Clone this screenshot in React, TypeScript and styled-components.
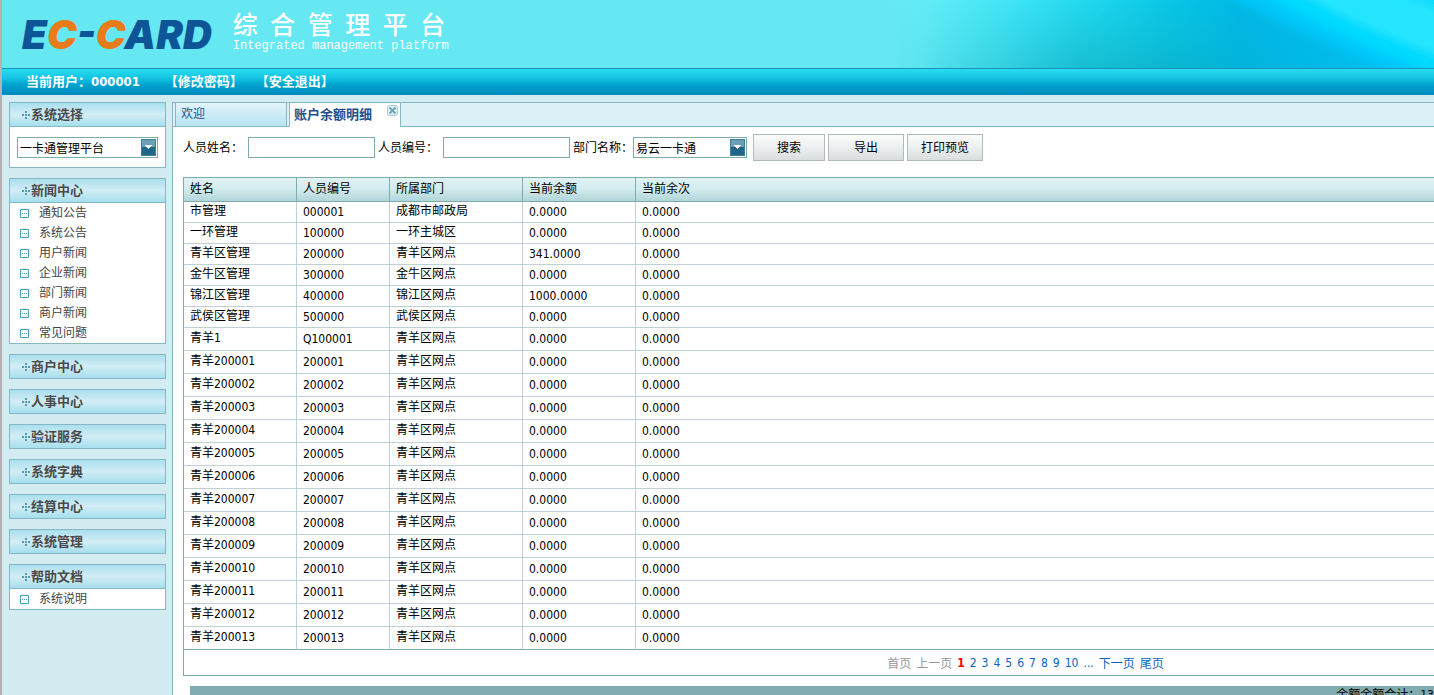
import React from "react";
import styled, { createGlobalStyle, css } from "styled-components";

const sans = `"DejaVu Sans Condensed", "Noto Sans", "Noto Sans CJK SC", sans-serif`;

const Global = createGlobalStyle`
  *, *::before, *::after { box-sizing: border-box; }
  html, body { margin: 0; padding: 0; overflow: hidden; }
  body { font-family: ${sans}; font-size: 12px; color: #000; background: #d3ecf1; }
  button, input, select { font-family: inherit; font-size: inherit; color: inherit; margin: 0; }
  a { text-decoration: none; color: inherit; }
  ul { list-style: none; margin: 0; padding: 0; }
`;

const Page = styled.div`
  display: flex;
  flex-direction: column;
  height: 100vh;
  overflow: hidden;
  border-left: 2px solid #b5b2b4;
`;

const Banner = styled.header`
  display: flex;
  justify-content: space-between;
  flex: none;
  height: 68px;
  background: #65e8f1;
  overflow: hidden;
`;

const Brand = styled.div`
  display: flex;
  gap: 21px;
  padding: 11px 0 0 20px;
`;

const Logo = styled.div`
  font-family: Inter, sans-serif;
  font-size: 40px;
  line-height: 48px;
  font-weight: 900;
  font-style: italic;
  color: #0e5597;
  white-space: nowrap;
`;

const Orange = styled.span`
  color: #e87b1a;
`;

const Slogan = styled.div`
  color: #fff;
  white-space: pre;
`;

const SloganTitle = styled.h1`
  margin: 0;
  padding-top: 2px;
  font-family: "Liberation Serif", "Noto Sans CJK SC", serif;
  font-size: 25px;
  line-height: 26px;
  font-weight: 500;
`;

const SloganText = styled.p`
  margin: 0;
  font-family: "Liberation Mono", monospace;
  font-size: 12px;
  line-height: 14px;
`;

const UserBar = styled.nav`
  display: flex;
  align-items: center;
  flex: none;
  height: 27px;
  padding: 0 0 4px 24px;
  gap: 13px;
  border-top: 1px solid #1c93bd;
  background: linear-gradient(#28dcf0, #14c4e2 35%, #00a4ce 60%, #0088bd);
  color: #fff;
  font-size: 13px;
  font-weight: bold;
`;

const CurrentUser = styled.span`
  margin-right: 12px;
`;

const Columns = styled.div`
  display: flex;
  flex: 1;
  min-height: 0;
  padding-top: 7px;
`;

const Sidebar = styled.aside`
  display: flex;
  flex-direction: column;
  gap: 10px;
  flex: none;
  width: 170px;
  padding: 0 6px 0 7px;
`;

const Panel = styled.section`
  border: 1px solid #86b7c3;
  background: #fff;
`;

const PanelTitle = styled.h2<{ $open: boolean }>`
  display: flex;
  align-items: center;
  gap: 1px;
  height: ${(p) => (p.$open ? 24 : 23)}px;
  margin: 0;
  padding-left: 12px;
  border-bottom: ${(p) => (p.$open ? "1px solid #86b7c3" : "0")};
  background: linear-gradient(#a9dfee, #d3edf4 50%, #a5dfee);
  color: #4a4a4a;
  font-size: 13px;
  line-height: 20px;
  font-weight: bold;
`;

const PanelBody = styled.div`
  padding: 10px 7px 9px;
`;

const MenuItem = styled.li`
  height: 20px;
`;

const MenuLink = styled.a`
  display: flex;
  align-items: center;
  gap: 10px;
  height: 20px;
  padding-left: 10px;
  color: #444;
`;

const MenuText = styled.span`
  padding-bottom: 3px;
`;

const SelectBox = styled.span<{ $width: number }>`
  position: relative;
  display: block;
  width: ${(p) => p.$width}px;
  height: 21px;
`;

const Select = styled.select`
  appearance: none;
  display: block;
  width: 100%;
  height: 21px;
  padding: 2px 18px 0 2px;
  border: 1px solid #7fabaf;
  border-radius: 0;
  background: #fff;
`;

const SelectArrow = styled.svg`
  position: absolute;
  top: 2px;
  right: 2px;
  pointer-events: none;
`;

const Main = styled.main`
  flex: 1;
  min-width: 0;
  overflow: hidden;
  border-left: 1px solid #86b7c3;
  background: #fff;
`;

const Tabs = styled.div`
  display: flex;
  gap: 2px;
  height: 25px;
  padding-left: 2px;
  border-top: 1px solid #86b7c3;
  border-bottom: 1px solid #86b7c3;
  background: #dcf0f7;
`;

const TabItem = styled.div<{ $active?: boolean }>`
  display: flex;
  justify-content: space-between;
  width: 112px;
  height: 23px;
  padding: 0 2px 0 5px;
  border: 0 solid #86b7c3;
  border-width: 0 1px;
  background: linear-gradient(#e2f4fa, #b8e4f0);
  color: #23508e;
  ${(p) =>
    p.$active &&
    css`
      height: 24px;
      padding-left: 4px;
      background: #fff;
      font-size: 13px;
      font-weight: bold;
    `}
`;

const TabLink = styled.a`
  line-height: 23px;
`;

const CloseButton = styled.button`
  align-self: flex-start;
  display: flex;
  padding: 2px 0 0;
  border: 0;
  background: none;
`;

const Content = styled.div`
  padding: 7px 0 0 10px;
`;

const SearchForm = styled.form`
  display: flex;
  align-items: center;
  gap: 3px;
  height: 27px;
  margin-bottom: 16px;
  white-space: nowrap;
`;

const Field = styled.div<{ $gap?: number }>`
  display: flex;
  align-items: center;
  gap: ${(p) => p.$gap ?? 0}px;
`;

const FieldLabel = styled.label`
  padding-bottom: 3px;
`;

const TextBox = styled.input`
  width: 127px;
  height: 21px;
  padding: 0 3px;
  border: 1px solid #7fabaf;
  border-radius: 0;
  background: #fff;
`;

const Buttons = styled.div`
  display: flex;
  gap: 3px;
  margin-left: 3px;
`;

const Button = styled.button<{ $width: number }>`
  width: ${(p) => p.$width}px;
  height: 27px;
  padding: 0 0 2px;
  border: 1px solid #b1b9ba;
  border-radius: 0;
  background: linear-gradient(#fafbfb, #eef1f1 45%, #d9dddd);
`;

const Sheet = styled.div`
  min-width: 1685px;
  border: 1px solid #7fabaf;
`;

const Table = styled.table`
  width: 100%;
  table-layout: fixed;
  border-collapse: separate;
  border-spacing: 0;
`;

const Col = styled.col<{ $width?: number }>`
  width: ${(p) => (p.$width ? `${p.$width}px` : "auto")};
`;

const HeadCell = styled.th`
  height: 24px;
  padding: 0 0 2px 6px;
  border-right: 1px solid #7fabaf;
  border-bottom: 1px solid #7fabaf;
  text-align: left;
  font-weight: normal;
  line-height: 20px;
`;

const HeadRow = styled.tr`
  background: linear-gradient(#e0f2f4, #d3ecee 45%, #aed3d7);
`;

const Cell = styled.td`
  padding: 0 0 0 6px;
  border-right: 1px solid #bfd1d8;
  border-bottom: 1px solid #bfd1d8;
  line-height: 18px;
  white-space: nowrap;
`;

const NameCell = styled(Cell)`
  padding-bottom: 2px;
`;

const Row = styled.tr<{ $tall: boolean }>`
  height: ${(p) => (p.$tall ? 23 : 21)}px;
  &:last-child > td {
    border-bottom-color: #7fabaf;
  }
`;

const Pager = styled.nav`
  display: flex;
  align-items: center;
  justify-content: center;
  gap: 5px;
  height: 25px;
  color: #0a62c4;
`;

const Muted = styled.span`
  color: #999;
`;

const Current = styled.b`
  color: #f00;
`;

const Summary = styled.footer`
  margin: 10px 0 0 7px;
  background: #80abb0;
  line-height: 18px;
  text-align: right;
  white-space: nowrap;
`;

const BannerArt = () => (
  <svg width="541" height="68" viewBox="0 0 541 68" aria-hidden="true">
    <defs>
      <linearGradient id="sea" x1="0" x2="1" y1="0" y2="0">
        <stop offset="0" stopColor="#65e8f1" />
        <stop offset="0.06" stopColor="#64ecf7" />
        <stop offset="0.2" stopColor="#44e6f7" />
        <stop offset="0.38" stopColor="#1cd6ee" />
        <stop offset="0.52" stopColor="#08c6e6" />
        <stop offset="0.64" stopColor="#00b9e6" />
        <stop offset="0.8" stopColor="#00bcec" />
        <stop offset="1" stopColor="#00c4f4" />
      </linearGradient>
      <linearGradient id="depth" x1="0" x2="0" y1="0" y2="1">
        <stop offset="0" stopColor="#0ba8b4" stopOpacity="0" />
        <stop offset="1" stopColor="#109fb0" stopOpacity="0.48" />
      </linearGradient>
      <linearGradient id="spread" x1="0" x2="1" y1="0" y2="0">
        <stop offset="0" stopColor="#000" />
        <stop offset="0.08" stopColor="#555" />
        <stop offset="0.35" stopColor="#fff" />
        <stop offset="0.5" stopColor="#ddd" />
        <stop offset="0.75" stopColor="#222" />
        <stop offset="1" stopColor="#000" />
      </linearGradient>
      <mask id="fade">
        <rect width="541" height="68" fill="url(#spread)" />
      </mask>
      <filter id="soft" x="-20%" y="-20%" width="140%" height="140%">
        <feGaussianBlur stdDeviation="4" />
      </filter>
    </defs>
    <rect width="541" height="68" fill="url(#sea)" />
    <rect width="541" height="68" fill="url(#depth)" mask="url(#fade)" />
    <g filter="url(#soft)">
      <path d="M310-20 L340-2 Q420 40 530 84 L570 84 L570-20Z" fill="#00c8fa" />
      <path d="M350-20 Q430 34 550 76 L570-20Z" fill="#00daff" />
      <path d="M390-20 Q450 22 570 64 L570 20 L470-20Z" fill="#28e6ff" />
      <path d="M490-20 L570 24 L570-20Z" fill="#0cdcfa" />
    </g>
  </svg>
);

const PlusDots = () => (
  <svg width="8" height="8" viewBox="0 0 8 8" fill="#4e9db8" aria-hidden="true">
    <path d="M3 0h2v2H3zM0 3h2v2H0zM3 3h2v2H3zM6 3h2v2H6zM3 6h2v2H3z" />
  </svg>
);

const NoteIcon = () => (
  <svg width="9" height="9" viewBox="0 0 9 9" aria-hidden="true">
    <path d="M.5.5h8v8h-8z" fill="#fff" stroke="#4a9fb8" />
    <path d="M2 4h1v1H2zM4 4h1v1H4zM6 4h1v1H6z" fill="#4a9fb8" />
  </svg>
);

const CloseIcon = () => (
  <svg width="11" height="11" viewBox="0 0 11 11" aria-hidden="true">
    <rect x=".5" y=".5" width="10" height="10" rx="2" fill="#e3f1f4" stroke="#a4cdd6" />
    <path d="M2.5 2.5l6 6M8.500 2.500l-6 6" stroke="#6fa6b4" strokeWidth="2" />
  </svg>
);

function Dropdown({ id, label, width, value }: { id: string; label?: string; width: number; value: string }) {
  return (
    <SelectBox $width={width}>
      <Select id={id} aria-label={label} defaultValue={value}>
        <option>{value}</option>
      </Select>
      <SelectArrow width="15" height="17" viewBox="0 0 15 17" aria-hidden="true">
        <rect width="15" height="17" fill="#3d7f9d" />
        <rect x="1" y="1" width="13" height="7" fill="#6d9fb9" />
        <rect x="1" y="8" width="13" height="8" fill="#1f6688" />
        <path d="M4 6h7v1h-1v1H9v1H8v1H7V9H6V8H5V7H4z" fill="#fff" />
      </SelectArrow>
    </SelectBox>
  );
}

const menus: { title: string; items?: string[] }[] = [
  { title: "新闻中心", items: ["通知公告", "系统公告", "用户新闻", "企业新闻", "部门新闻", "商户新闻", "常见问题"] },
  { title: "商户中心" },
  { title: "人事中心" },
  { title: "验证服务" },
  { title: "系统字典" },
  { title: "结算中心" },
  { title: "系统管理" },
  { title: "帮助文档", items: ["系统说明"] },
];

const accounts: string[][] = [
  ["市管理", "000001", "成都市邮政局", "0.0000", "0.0000"],
  ["一环管理", "100000", "一环主城区", "0.0000", "0.0000"],
  ["青羊区管理", "200000", "青羊区网点", "341.0000", "0.0000"],
  ["金牛区管理", "300000", "金牛区网点", "0.0000", "0.0000"],
  ["锦江区管理", "400000", "锦江区网点", "1000.0000", "0.0000"],
  ["武侯区管理", "500000", "武侯区网点", "0.0000", "0.0000"],
  ["青羊1", "Q100001", "青羊区网点", "0.0000", "0.0000"],
  ...Array.from({ length: 13 }, (_, i) => {
    const code = String(200001 + i);
    return ["青羊" + code, code, "青羊区网点", "0.0000", "0.0000"];
  }),
];

const pages = ["2", "3", "4", "5", "6", "7", "8", "9", "10", "..."];

export default function App() {
  return (
    <Page>
      <Global />
      <Banner>
        <Brand>
          <Logo>
            E<Orange>C</Orange>-<Orange>C</Orange>ARD
          </Logo>
          <Slogan>
            <SloganTitle>{"综  合  管  理  平  台"}</SloganTitle>
            <SloganText>Integrated management platform</SloganText>
          </Slogan>
        </Brand>
        <BannerArt />
      </Banner>
      <UserBar>
        <CurrentUser>当前用户：000001</CurrentUser>
        <a href="#password">【修改密码】</a>
        <a href="#logout">【安全退出】</a>
      </UserBar>
      <Columns>
        <Sidebar>
          <Panel>
            <PanelTitle $open>
              <PlusDots />
              系统选择
            </PanelTitle>
            <PanelBody>
              <Dropdown id="system" label="系统选择" width={141} value="一卡通管理平台" />
            </PanelBody>
          </Panel>
          {menus.map((menu) => (
            <Panel key={menu.title}>
              <PanelTitle $open={!!menu.items}>
                <PlusDots />
                {menu.title}
              </PanelTitle>
              {menu.items && (
                <ul>
                  {menu.items.map((item) => (
                    <MenuItem key={item}>
                      <MenuLink href="#menu">
                        <NoteIcon />
                        <MenuText>{item}</MenuText>
                      </MenuLink>
                    </MenuItem>
                  ))}
                </ul>
              )}
            </Panel>
          ))}
        </Sidebar>
        <Main>
          <Tabs>
            <TabItem>
              <TabLink href="#welcome">欢迎</TabLink>
            </TabItem>
            <TabItem $active>
              <TabLink href="#balance">账户余额明细</TabLink>
              <CloseButton type="button" aria-label="关闭">
                <CloseIcon />
              </CloseButton>
            </TabItem>
          </Tabs>
          <Content>
            <SearchForm onSubmit={(e) => e.preventDefault()}>
              <Field $gap={5}>
                <FieldLabel htmlFor="name">人员姓名：</FieldLabel>
                <TextBox id="name" />
              </Field>
              <Field $gap={5}>
                <FieldLabel htmlFor="code">人员编号：</FieldLabel>
                <TextBox id="code" />
              </Field>
              <Field>
                <FieldLabel htmlFor="dept">部门名称：</FieldLabel>
                <Dropdown id="dept" width={114} value="易云一卡通" />
              </Field>
              <Buttons>
                <Button $width={72}>搜索</Button>
                <Button $width={76} type="button">导出</Button>
                <Button $width={76} type="button">打印预览</Button>
              </Buttons>
            </SearchForm>
            <Sheet>
              <Table>
                <colgroup>
                  <Col $width={113} />
                  <Col $width={93} />
                  <Col $width={133} />
                  <Col $width={113} />
                  <Col />
                </colgroup>
                <thead>
                  <HeadRow>
                    <HeadCell>姓名</HeadCell>
                    <HeadCell>人员编号</HeadCell>
                    <HeadCell>所属部门</HeadCell>
                    <HeadCell>当前余额</HeadCell>
                    <HeadCell>当前余次</HeadCell>
                  </HeadRow>
                </thead>
                <tbody>
                  {accounts.map(([name, code, dept, balance, count], i) => (
                    <Row key={code} $tall={i > 5}>
                      <NameCell>{name}</NameCell>
                      <Cell>{code}</Cell>
                      <NameCell>{dept}</NameCell>
                      <Cell>{balance}</Cell>
                      <Cell>{count}</Cell>
                    </Row>
                  ))}
                </tbody>
              </Table>
              <Pager aria-label="分页">
                <Muted>首页</Muted>
                <Muted>上一页</Muted>
                <Current>1</Current>
                {pages.map((p) => (
                  <a key={p} href="#page">{p}</a>
                ))}
                <a href="#next">下一页</a>
                <a href="#last">尾页</a>
              </Pager>
            </Sheet>
            <Summary>余额余额合计：13</Summary>
          </Content>
        </Main>
      </Columns>
    </Page>
  );
}
